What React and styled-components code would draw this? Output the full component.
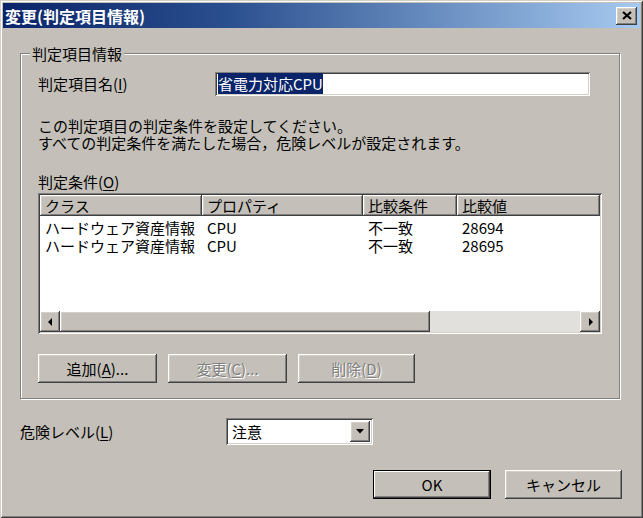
import React from 'react';
import styled, { createGlobalStyle, css } from 'styled-components';

const FACE = '#c4c0b9';
const LIGHT = '#d4d0c8';

const GlobalStyle = createGlobalStyle`
    * {
        box-sizing: border-box;
    }

    html,
    body {
        margin: 0;
        padding: 0;
        background: ${FACE};
    }

    body {
        font-family: "Noto Sans CJK JP", "Noto Sans", sans-serif;
        font-size: 15px;
        color: #000;
    }

    u {
        text-underline-offset: 2px;
    }
`;

const raised = css`
    box-shadow: inset -1px -1px #404040, inset 1px 1px #fff,
        inset -2px -2px #808080, inset 2px 2px ${LIGHT};
`;

const sunken = css`
    box-shadow: inset 1px 1px #808080, inset -1px -1px #fff,
        inset 2px 2px #404040, inset -2px -2px ${LIGHT};
`;

const Window = styled.div`
    width: 643px;
    height: 518px;
    padding: 3px;
    background: ${FACE};
    box-shadow: inset 1px 1px ${LIGHT}, inset -1px -1px #404040,
        inset 2px 2px #fff, inset -2px -2px #808080;
    display: flex;
    flex-direction: column;
`;

const TitleBar = styled.div`
    height: 25px;
    display: flex;
    align-items: center;
    justify-content: space-between;
    padding: 0 3px 0 2px;
    background: linear-gradient(to right, #0a246a 0%, #2a4f8e 35%, #a6caf0 100%);
`;

const TitleText = styled.span`
    color: #fff;
    font-weight: bold;
    font-size: 16px;
    line-height: 18px;
`;

const CloseButton = styled.button`
    width: 21px;
    height: 18px;
    padding: 0;
    border: 0;
    background: ${FACE};
    ${raised};
    display: flex;
    align-items: center;
    justify-content: center;
`;

const Body = styled.div`
    padding: 25px 18px 0 17px;
    display: flex;
    flex-direction: column;
`;

const Group = styled.div`
    position: relative;
    width: 600px;
    height: 346px;
    border: 1px solid #808080;
    box-shadow: inset 1px 1px #fff, 1px 1px #fff;
    padding: 18px 16px 0 17px;
    display: flex;
    flex-direction: column;
`;

const Legend = styled.span`
    position: absolute;
    top: -9px;
    left: 9px;
    padding: 0 2px;
    line-height: 17px;
    background: ${FACE};
`;

const FieldRow = styled.div`
    display: flex;
    align-items: center;
    height: 24px;
`;

const FieldLabel = styled.label`
    width: ${(p) => p.width}px;
    flex: none;
    line-height: 16px;
    white-space: nowrap;
`;

const TextBox = styled.div`
    width: 375px;
    height: 24px;
    padding: 3px 3px;
    background: #fff;
    ${sunken};
    line-height: 18px;
    white-space: nowrap;
`;

const Selected = styled.span`
    background: #0a246a;
    color: #fff;
`;

const Description = styled.p`
    margin: 21px 0 0;
    line-height: 17px;
`;

const ListCaption = styled.div`
    margin-top: 23px;
    line-height: 16px;
`;

const ListView = styled.div`
    margin-top: 3px;
    width: 564px;
    height: 141px;
    padding: 2px;
    background: #fff;
    ${sunken};
    display: flex;
    flex-direction: column;
`;

const HeaderRow = styled.div`
    display: flex;
    height: 21px;
    flex: none;
`;

const HeaderCell = styled.div`
    width: ${(p) => (p.width ? `${p.width}px` : 'auto')};
    flex: ${(p) => (p.width ? 'none' : '1')};
    padding-left: 5px;
    background: ${FACE};
    ${raised};
    line-height: 21px;
    white-space: nowrap;
`;

const Rows = styled.div`
    flex: 1;
    padding-top: 3px;
`;

const Row = styled.div`
    display: flex;
    height: 18px;
`;

const Cell = styled.div`
    width: ${(p) => (p.width ? `${p.width}px` : 'auto')};
    flex: ${(p) => (p.width ? 'none' : '1')};
    padding-left: 5px;
    line-height: 18px;
    white-space: nowrap;
`;

const ScrollBar = styled.div`
    display: flex;
    height: 21px;
    flex: none;
`;

const ScrollArrow = styled.div`
    width: 20px;
    flex: none;
    background: ${FACE};
    ${raised};
    display: flex;
    align-items: center;
    justify-content: center;
`;

const ScrollThumb = styled.div`
    width: 370px;
    flex: none;
    background: ${FACE};
    ${raised};
`;

// dithered white/face track, drawn as its average tone
const ScrollTrack = styled.div`
    flex: 1;
    background: #e2e0dc;
`;

const ButtonRow = styled.div`
    display: flex;
    gap: 11px;
    margin-top: 20px;
`;

const Button = styled.button`
    width: ${(p) => p.width || 118}px;
    height: 29px;
    padding: 0;
    border: 0;
    background: ${FACE};
    font: inherit;
    line-height: 18px;
    color: ${(p) => (p.disabled ? '#808080' : '#000')};
    text-shadow: ${(p) => (p.disabled ? '1px 1px #fff' : 'none')};
    ${(p) =>
        p.isDefault
            ? css`
                  box-shadow: inset 0 0 0 1px #000, inset -2px -2px #404040,
                      inset 2px 2px #fff, inset -3px -3px #808080;
              `
            : raised};
`;

const LevelRow = styled.div`
    display: flex;
    align-items: center;
    margin-top: 19px;
`;

const Combo = styled.div`
    width: 147px;
    height: 27px;
    padding: 2px;
    background: #fff;
    ${sunken};
    display: flex;
`;

const ComboText = styled.span`
    flex: 1;
    padding-left: 4px;
    line-height: 23px;
`;

const ComboButton = styled.div`
    width: 20px;
    margin: 1px 1px 1px 0;
    background: ${FACE};
    ${raised};
    display: flex;
    align-items: center;
    justify-content: center;
`;

const DialogButtons = styled.div`
    display: flex;
    justify-content: flex-end;
    gap: 14px;
    margin-top: 25px;
`;

const CloseIcon = () => (
    <svg width="10" height="9" viewBox="0 0 10 9">
        <path d="M1 1 L9 8 M9 1 L1 8" stroke="#000" strokeWidth="2.2" />
    </svg>
);

const Arrow = ({ dir }) => (
    <svg width="5" height="8" viewBox="0 0 5 8">
        <polygon
            points={dir === 'left' ? '4,0 0,4 4,8' : '1,0 5,4 1,8'}
            fill="#000"
        />
    </svg>
);

const DownArrow = () => (
    <svg width="8" height="5" viewBox="0 0 8 5">
        <polygon points="0,0 8,0 4,4.5" fill="#000" />
    </svg>
);

const columns = [
    { label: 'クラス', width: 162 },
    { label: 'プロパティ', width: 161 },
    { label: '比較条件', width: 94 },
    { label: '比較値' },
];

const conditions = [
    ['ハードウェア資産情報', 'CPU', '不一致', '28694'],
    ['ハードウェア資産情報', 'CPU', '不一致', '28695'],
];

const App = () => {
    return (
        <>
            <GlobalStyle />
            <Window>
                <TitleBar>
                    <TitleText>変更(判定項目情報)</TitleText>
                    <CloseButton aria-label="閉じる">
                        <CloseIcon />
                    </CloseButton>
                </TitleBar>
                <Body>
                    <Group>
                        <Legend>判定項目情報</Legend>
                        <FieldRow>
                            <FieldLabel width={177}>
                                判定項目名(<u>I</u>)
                            </FieldLabel>
                            <TextBox>
                                <Selected>省電力対応CPU</Selected>
                            </TextBox>
                        </FieldRow>
                        <Description>
                            この判定項目の判定条件を設定してください。
                            <br />
                            すべての判定条件を満たした場合，危険レベルが設定されます。
                        </Description>
                        <ListCaption>
                            判定条件(<u>O</u>)
                        </ListCaption>
                        <ListView>
                            <HeaderRow>
                                {columns.map((c) => (
                                    <HeaderCell key={c.label} width={c.width}>
                                        {c.label}
                                    </HeaderCell>
                                ))}
                            </HeaderRow>
                            <Rows>
                                {conditions.map((row, i) => (
                                    <Row key={i}>
                                        {row.map((v, j) => (
                                            <Cell key={j} width={columns[j].width}>
                                                {v}
                                            </Cell>
                                        ))}
                                    </Row>
                                ))}
                            </Rows>
                            <ScrollBar>
                                <ScrollArrow>
                                    <Arrow dir="left" />
                                </ScrollArrow>
                                <ScrollThumb />
                                <ScrollTrack />
                                <ScrollArrow>
                                    <Arrow dir="right" />
                                </ScrollArrow>
                            </ScrollBar>
                        </ListView>
                        <ButtonRow>
                            <Button width={119}>
                                追加(<u>A</u>)...
                            </Button>
                            <Button width={119} disabled>
                                変更(<u>C</u>)...
                            </Button>
                            <Button width={117} disabled>
                                削除(<u>D</u>)
                            </Button>
                        </ButtonRow>
                    </Group>
                    <LevelRow>
                        <FieldLabel width={206}>
                            危険レベル(<u>L</u>)
                        </FieldLabel>
                        <Combo>
                            <ComboText>注意</ComboText>
                            <ComboButton>
                                <DownArrow />
                            </ComboButton>
                        </Combo>
                    </LevelRow>
                    <DialogButtons>
                        <Button isDefault>OK</Button>
                        <Button width={117}>キャンセル</Button>
                    </DialogButtons>
                </Body>
            </Window>
        </>
    );
};

export default App;
